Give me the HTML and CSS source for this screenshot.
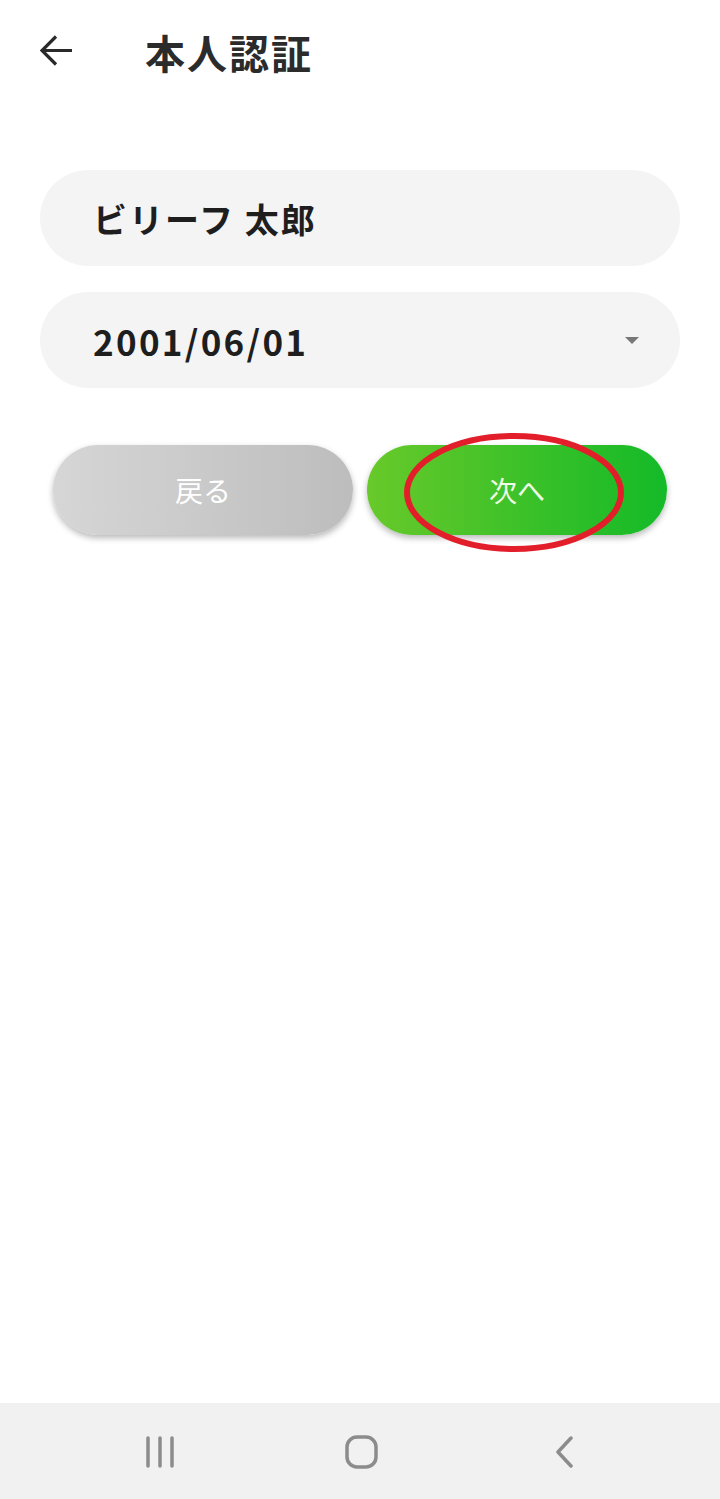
FILE: index.html
```html
<!DOCTYPE html>
<html lang="ja">
<head>
<meta charset="utf-8">
<title>本人認証</title>
<link rel="stylesheet" href="styles.css">
</head>
<body>
<div class="screen">
  <header class="appbar">
    <svg class="back" width="34" height="34" viewBox="0 0 34 34" aria-hidden="true">
      <path d="M32 16.5 H3 M16 2.5 L2 16.5 L16 30.5" fill="none" stroke="#2a2a2a" stroke-width="3.2" stroke-linecap="butt" stroke-linejoin="miter"/>
    </svg>
    <h1 class="title">本人認証</h1>
  </header>

  <main class="form">
    <div class="field name">ビリーフ 太郎</div>
    <div class="field select">
      <span>2001/06/01</span>
      <svg class="caret" width="14" height="7" viewBox="0 0 14 7" aria-hidden="true"><path d="M0 0 H14 L7 7 Z" fill="#777"/></svg>
    </div>
    <div class="actions">
      <button class="btn btn-back">戻る</button>
      <button class="btn btn-next">次へ</button>
      <svg class="mark" width="222" height="121" viewBox="0 0 222 121" aria-hidden="true">
        <ellipse cx="111" cy="60.5" rx="107" ry="56.5" fill="none" stroke="#e31e2b" stroke-width="6"/>
      </svg>
    </div>
  </main>

  <nav class="navbar">
    <div class="navcell">
      <svg width="30" height="32" viewBox="0 0 30 32"><path d="M3 2 V30 M15 2 V30 M27 2 V30" stroke="#8c8c8c" stroke-width="3.5" stroke-linecap="round"/></svg>
    </div>
    <div class="navcell home">
      <svg width="34" height="34" viewBox="0 0 34 34"><rect x="2" y="2" width="29" height="30" rx="10" fill="none" stroke="#8c8c8c" stroke-width="3.5"/></svg>
    </div>
    <div class="navcell backnav">
      <svg width="20" height="32" viewBox="0 0 20 32"><path d="M17 2 L4 16 L17 30" fill="none" stroke="#8c8c8c" stroke-width="3.5" stroke-linecap="round" stroke-linejoin="round"/></svg>
    </div>
  </nav>
</div>
</body>
</html>
```

FILE: styles.css
```css
* { box-sizing: border-box; }
html, body { margin: 0; padding: 0; background: #ffffff; }
body {
  font-family: "Noto Sans CJK JP", "Noto Sans", sans-serif;
  color: #222222;
}
.screen {
  width: 720px;
  height: 1499px;
  display: flex;
  flex-direction: column;
  overflow: hidden;
}
.appbar {
  height: 107px;
  display: flex;
  align-items: center;
  padding-left: 40px;
  padding-bottom: 3px;
}
.back { flex: none; margin-top: -2px; }
.title {
  margin: 0 0 0 71px;
  font-size: 40px;
  font-weight: 700;
  color: #2b2b2b;
  line-height: 1;
  letter-spacing: 2px;
}
.form {
  padding: 63px 40px 0;
  display: flex;
  flex-direction: column;
  gap: 26px;
}
.field {
  height: 96px;
  border-radius: 48px;
  background: #f4f4f4;
  display: flex;
  align-items: center;
  padding: 0 41px 0 53px;
  font-size: 34px;
  font-weight: 700;
  color: #1e1e1e;
}
.name { letter-spacing: 2px; }
.select { justify-content: space-between; }
.select span { font-size: 35px; letter-spacing: 2.3px; }
.actions {
  position: relative;
  margin-top: 31px;
  padding: 0 13px;
  display: flex;
  gap: 14px;
}
.btn {
  flex: 1;
  height: 90px;
  border: 0;
  border-radius: 45px;
  font-family: inherit;
  font-size: 28px;
  font-weight: 400;
  color: #ffffff;
  box-shadow: 0 3px 6px rgba(0, 0, 0, 0.28);
  padding: 0;
}
.btn-back { background: linear-gradient(90deg, #d6d6d6, #bdbdbd); }
.btn-next {
  background: linear-gradient(90deg, #68c92a, #14ba28);
  color: #eefbe6;
}
.mark {
  position: absolute;
  left: 363px;
  top: -13px;
}
.navbar {
  margin-top: auto;
  height: 96px;
  background: #f1f1f1;
  display: flex;
  justify-content: center;
  align-items: center;
  padding-top: 2px;
}
.navcell {
  width: 200px;
  display: flex;
  justify-content: center;
  align-items: center;
}
.navcell.home { padding-left: 3px; }
.navcell.backnav { padding-left: 8px; }
.navcell svg { display: block; }
```
